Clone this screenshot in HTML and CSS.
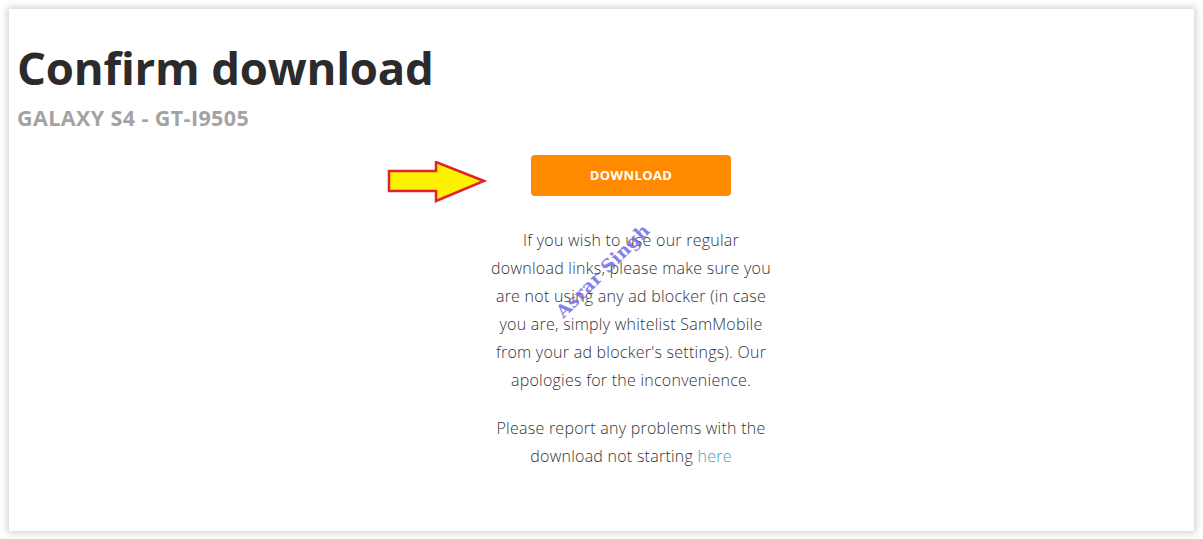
FILE: index.html
```html
<!DOCTYPE html>
<html>
<head>
    <title>Confirm download</title>
    <link rel="stylesheet" href="styles.css">
</head>
<body>
    <div class="panel">
        <h1>Confirm download</h1>
        <h3 class="model">GALAXY S4 - GT-I9505</h3>

        <div class="center">
            <div class="col">
                <div class="btn-wrap">
                    <svg class="arrow" width="100" height="44" viewBox="0 0 100 44">
                        <polygon points="2,10 49,10 49,1 97,20 49,40 49,30 2,30" fill="#fbf100" stroke="#e0232b" stroke-width="2.5" stroke-linejoin="miter"/>
                    </svg>
                    <a class="btn" href="#">DOWNLOAD</a>
                </div>
                <p>If you wish to use our regular download links, please make sure you are not using any ad blocker (in case you are, simply whitelist SamMobile from your ad blocker's settings). Our apologies for the inconvenience.</p>
                <p>Please report any problems with the download not starting <a href="#">here</a></p>
                <span class="mark">Asrar Singh</span>
            </div>
        </div>
    </div>
</body>
</html>
```

FILE: styles.css
```css
body {
    margin: 0;
    background-color: #fff;
    font-family: "Open Sans", sans-serif;
}

.panel {
    margin: 9px 9px 8px 9px;
    height: 522px;
    box-sizing: border-box;
    padding: 30px 8px 0 8px;
    background-color: #fff;
    box-shadow: 0 0 7px 2px rgba(0, 0, 0, 0.18);
}

h1 {
    margin: 0;
    font-family: "Open Sans", sans-serif;
    font-weight: 700;
    font-size: 45.5px;
    line-height: 56px;
    letter-spacing: -0.2px;
    color: #2b2b2b;
}

.model {
    margin: 10px 0 0 0;
    font-size: 21.5px;
    font-weight: 700;
    line-height: 26px;
    letter-spacing: 0.4px;
    color: #a3a3a3;
}

.center {
    display: flex;
    justify-content: center;
    padding-left: 59px;
}

.col {
    position: relative;
    width: 292px;
    text-align: center;
}

.btn-wrap {
    position: relative;
    margin-top: 24px;
    display: flex;
    justify-content: center;
}

.btn {
    display: block;
    width: 200px;
    height: 41px;
    line-height: 41px;
    background-color: #ff8a00;
    border-radius: 4px;
    color: #fff;
    font-size: 13px;
    font-weight: 700;
    letter-spacing: 0.4px;
    text-decoration: none;
}

.arrow {
    position: absolute;
    left: -98px;
    top: 6px;
}

p {
    margin: 30px 0 0 0;
    font-size: 16px;
    font-weight: 300;
    line-height: 28px;
    letter-spacing: 0.25px;
    color: #333;
}

p + p {
    margin-top: 20px;
}

p a {
    color: #3ba3b8;
    text-decoration: none;
}

.mark {
    position: absolute;
    left: 43px;
    top: 130px;
    width: 150px;
    line-height: 20px;
    text-align: center;
    transform: rotate(-45deg);
    font-family: "DejaVu Serif", serif;
    font-weight: 700;
    font-size: 18px;
    letter-spacing: 0.4px;
    color: #6d6de6;
    opacity: 0.85;
}
```
